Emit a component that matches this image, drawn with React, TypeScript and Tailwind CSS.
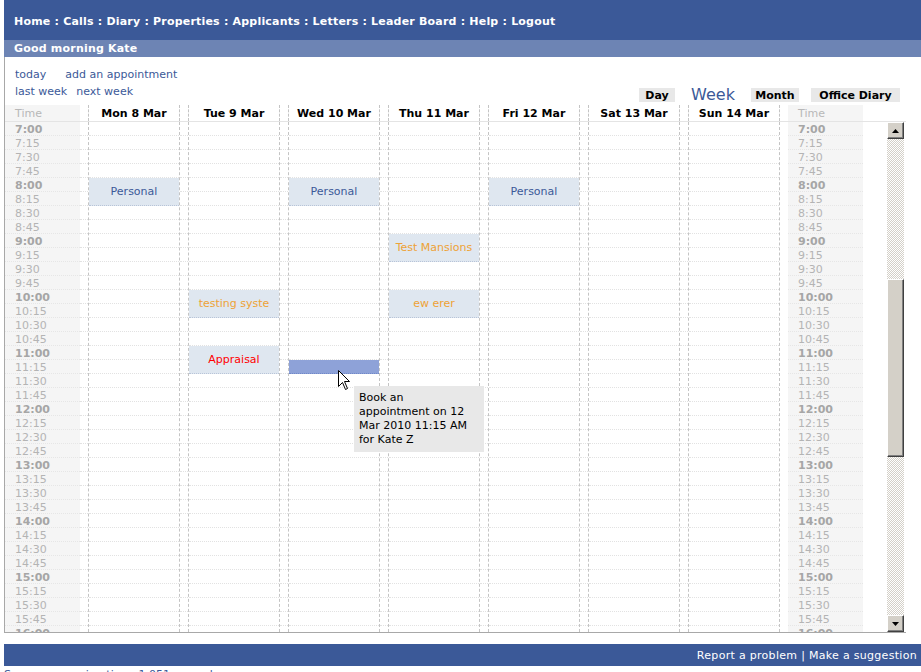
import React from 'react';

const navItems = ['Home', 'Calls', 'Diary', 'Properties', 'Applicants', 'Letters', 'Leader Board', 'Help', 'Logout'];
const days = ['Mon 8 Mar', 'Tue 9 Mar', 'Wed 10 Mar', 'Thu 11 Mar', 'Fri 12 Mar', 'Sat 13 Mar', 'Sun 14 Mar'];

// quarter-hour slots from 7:00; the scroll box cuts the last ones off
const slots = Array.from({ length: 38 }, (_, i) => {
    const h = 7 + Math.floor(i / 4);
    const m = (i % 4) * 15;
    return { label: `${h}:${m === 0 ? '00' : m}`, hour: m === 0 };
});

type Appt = { start: number; len: number; title?: string; color?: string; picked?: boolean };

const blue = 'text-[#3b5998]';
const orange = 'text-[#eea236]';
const red = 'text-[#ff0000]';

const week: Appt[][] = [
    [{ start: 4, len: 2, title: 'Personal', color: blue }],
    [
        { start: 12, len: 2, title: 'testing syste', color: orange },
        { start: 16, len: 2, title: 'Appraisal', color: red },
    ],
    [
        { start: 4, len: 2, title: 'Personal', color: blue },
        { start: 17, len: 1, picked: true },
    ],
    [
        { start: 8, len: 2, title: 'Test Mansions', color: orange },
        { start: 12, len: 2, title: 'ew erer', color: orange },
    ],
    [{ start: 4, len: 2, title: 'Personal', color: blue }],
    [],
    [],
];

function TimeColumn() {
    return (
        <div className="w-[75px] shrink-0 bg-[#f5f5f5]">
            {slots.map((s) => (
                <div
                    key={s.label}
                    className={`h-[14px] pl-[10px] leading-[15px] border-b border-dotted border-[#e6e6e6] ${s.hour ? 'font-bold text-[#a6a6a6]' : 'text-[#b4b4b4]'}`}
                >
                    {s.label}
                </div>
            ))}
        </div>
    );
}

function DayColumn({ appts }: { appts: Appt[] }) {
    const cells: React.ReactNode[] = [];
    let i = 0;
    while (i < slots.length) {
        const a = appts.find((x) => x.start === i);
        if (a && a.picked) {
            cells.push(<div key={i} className="h-[14px] bg-[#8ea2d8] border-b border-dotted border-[#7088c8]" />);
            i += a.len;
        } else if (a) {
            cells.push(
                <div
                    key={i}
                    style={{ height: a.len * 14 }}
                    className={`flex items-center justify-center pt-[2px] bg-[#dfe7f0] border-b border-dotted border-[#b8c4d8] whitespace-nowrap overflow-hidden ${a.color}`}
                >
                    {a.title}
                </div>
            );
            i += a.len;
        } else {
            cells.push(<div key={i} className="h-[14px] border-b border-dotted border-[#e2e2e2]" />);
            i++;
        }
    }
    return (
        <div className="flex w-[100px] shrink-0">
            <div className="w-[8px]">
                {slots.map((s) => (
                    <div key={s.label} className="h-[14px] border-b border-dotted border-[#e2e2e2]" />
                ))}
            </div>
            <div className="w-[92px] border-x border-dashed border-[#c4c4c4]">{cells}</div>
        </div>
    );
}

function ScrollButton({ down }: { down?: boolean }) {
    return (
        <div className="h-[17px] flex items-center justify-center bg-[#d4d0c8] border border-t-white border-l-white border-r-[#404040] border-b-[#404040] shadow-[inset_-1px_-1px_0_#808080]">
            <svg width="7" height="4" viewBox="0 0 7 4">
                {down ? <path d="M0 0h7L3.5 4z" fill="#000" /> : <path d="M0 4h7L3.5 0z" fill="#000" />}
            </svg>
        </div>
    );
}

export default function App() {
    return (
        <div className="w-[921px] h-[672px] overflow-hidden bg-white pl-[4px] font-['DejaVu_Sans',Verdana,sans-serif] text-[11px] text-black">
            {/* top menu */}
            <div className="h-[40px] bg-[#3b5998] flex items-center pl-[10px] pt-[4px] text-white font-bold tracking-[0.2px]">
                {navItems.map((n, i) => (
                    <span key={n}>
                        {n}
                        {i < navItems.length - 1 && <span>&nbsp;:&nbsp;</span>}
                    </span>
                ))}
            </div>
            <div className="h-[17px] bg-[#6d84b4] flex items-center pl-[10px] pt-[2px] text-white font-bold tracking-[0.2px]">
                Good morning Kate
            </div>

            {/* diary box */}
            <div className="w-[902px] border-l border-b border-[#a8a8a8]">
                <div className="h-[48px] flex justify-between pt-[9px] pl-[10px] pr-[6px]">
                    <div className="leading-[17px] text-[#3b5998]">
                        <div>
                            <span>today</span>
                            <span className="ml-[19px]">add an appointment</span>
                        </div>
                        <div>
                            <span>last week</span>
                            <span className="ml-[9px]">next week</span>
                        </div>
                    </div>
                    <div className="self-end mb-[3px] flex items-center font-bold">
                        <span className="w-[36px] bg-[#e8e8e8] h-[14px] leading-[15px] text-center">Day</span>
                        <span className="w-[46px] mx-[15px] font-normal text-[16px] leading-[14px] text-center text-[#3b5998]">Week</span>
                        <span className="w-[48px] bg-[#e8e8e8] h-[14px] leading-[15px] text-center">Month</span>
                        <span className="w-[89px] ml-[12px] bg-[#e8e8e8] h-[14px] leading-[15px] text-center">Office Diary</span>
                    </div>
                </div>

                {/* day headings */}
                <div className="flex h-[17px] border-b border-[#e4e4e4]">
                    <div className="w-[75px] shrink-0 bg-[#f5f5f5] pl-[10px] leading-[17px] text-[#b8b8b8]">Time</div>
                    {days.map((d) => (
                        <div key={d} className="flex w-[100px] shrink-0">
                            <div className="w-[8px]" />
                            <div className="w-[92px] border-x border-dashed border-[#c4c4c4] text-center font-bold leading-[17px]">{d}</div>
                        </div>
                    ))}
                    <div className="ml-[8px] w-[75px] shrink-0 bg-[#f5f5f5] pl-[10px] leading-[17px] text-[#b8b8b8]">Time</div>
                </div>

                {/* scrolling week grid */}
                <div className="relative flex h-[510px] overflow-hidden">
                    <div className="flex w-[882px] shrink-0">
                        <TimeColumn />
                        {week.map((appts, i) => (
                            <DayColumn key={i} appts={appts} />
                        ))}
                        <div className="ml-[8px]">
                            <TimeColumn />
                        </div>
                    </div>
                    <div className="w-[17px] flex flex-col">
                        <ScrollButton />
                        <div className="h-[140px] bg-[repeating-conic-gradient(#d4d0c8_0%_25%,#ffffff_0%_50%)] bg-[length:2px_2px]" />
                        <div className="h-[178px] bg-[#d4d0c8] border border-t-white border-l-white border-r-[#404040] border-b-[#404040] shadow-[inset_-1px_-1px_0_#808080]" />
                        <div className="h-[158px] bg-[repeating-conic-gradient(#d4d0c8_0%_25%,#ffffff_0%_50%)] bg-[length:2px_2px]" />
                        <ScrollButton down />
                    </div>

                    {/* mouse pointer and hint over Wed 11:15 */}
                    <svg className="absolute left-[333px] top-[248px]" width="13" height="21" viewBox="0 0 13 21">
                        <path d="M0.5 0.5V16.5L4.5 12.5L7.5 19.5L9.5 18.5L6.5 11.5H11.5Z" fill="#fff" stroke="#000" strokeWidth="1" />
                    </svg>
                    <div className="absolute left-[349px] top-[264px] w-[130px] bg-[#e8e8e8] px-[5px] py-[5px] leading-[14px]">
                        Book an
                        <br />
                        appointment on 12
                        <br />
                        Mar 2010 11:15 AM
                        <br />
                        for Kate Z
                    </div>
                </div>
            </div>

            <div className="h-[11px]" />
            <div className="h-[22px] bg-[#3b5998] flex items-center justify-end pr-[4px] pt-[3px] text-white tracking-[0.3px]">
                Report a problem | Make a suggestion
            </div>
            <div className="mt-[2px] leading-[14px] text-[#3b5998]">Server processing time: 1.051 seconds</div>
        </div>
    );
}
